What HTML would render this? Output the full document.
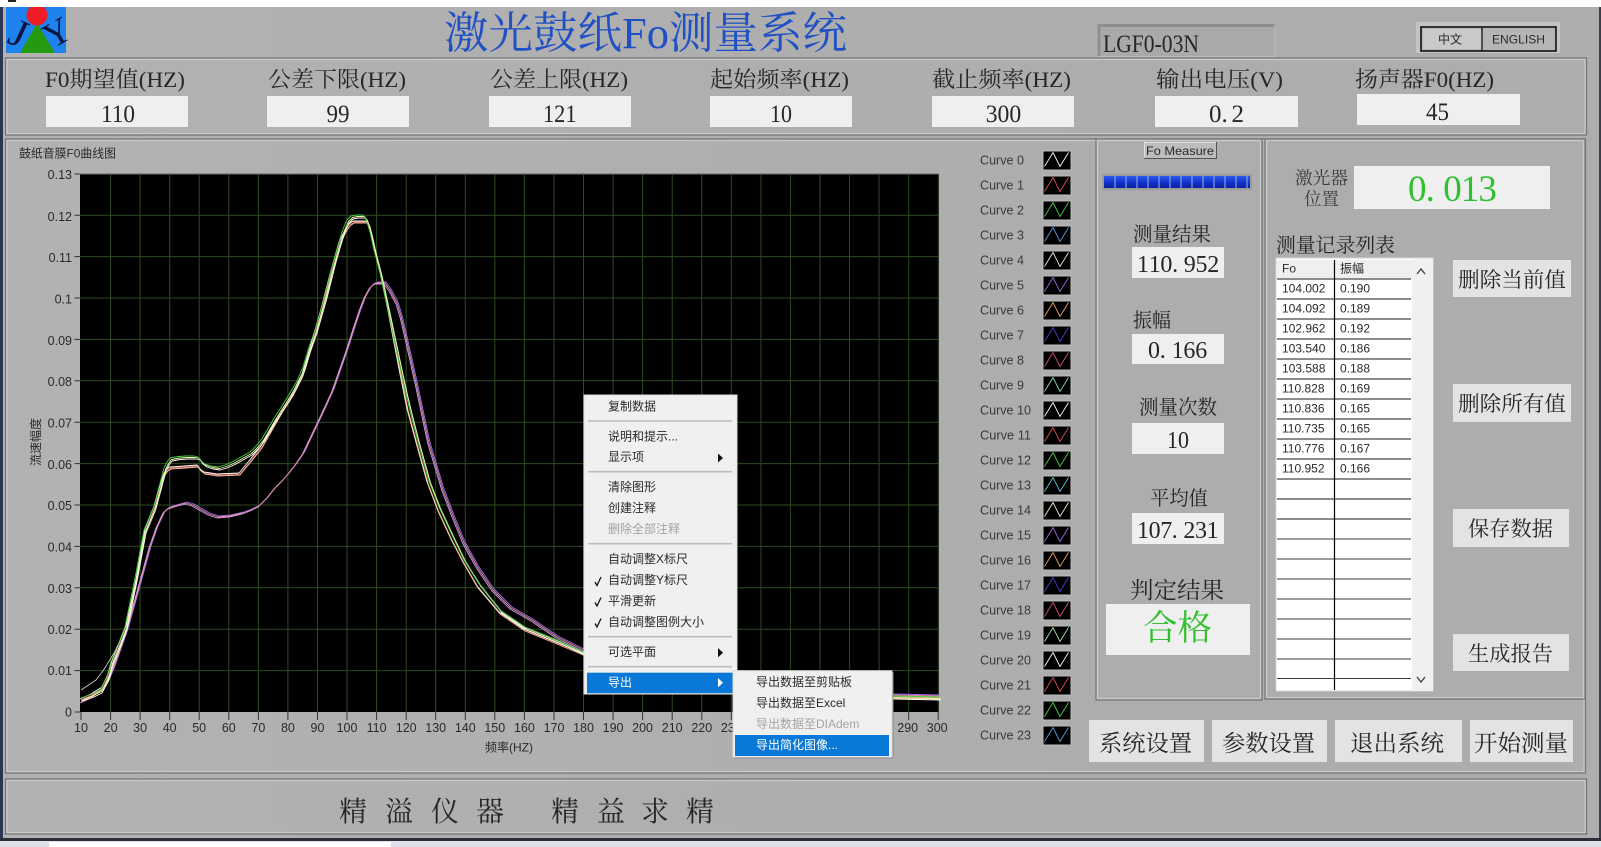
<!DOCTYPE html>
<html lang="zh-CN">
<head>
<meta charset="utf-8">
<title>激光鼓纸Fo测量系统</title>
<style>
html,body{margin:0;padding:0;width:1601px;height:847px;overflow:hidden;background:#adadad}
svg{display:block;position:absolute;left:0;top:0}
.s{font-family:"Liberation Serif","Noto Serif CJK SC",serif;fill:#262626}
.u{font-family:"Liberation Sans","Noto Sans CJK SC",sans-serif;fill:#2a2a2a;font-size:12px}
.l{font-size:22px}
.n{font-size:25px}
.b{font-size:21px}
.t{font-size:12.5px}
.c{font-size:12.5px;fill:#3a3a3a}
.p1{fill:none;stroke:#747474;stroke-width:1.2}
.p2{fill:none;stroke:#cbcbcb;stroke-width:1.2}
.v{fill:#efefef}
.k{fill:#e3e3e3}
</style>
</head>
<body>
<svg width="1601" height="847" viewBox="0 0 1601 847" xmlns="http://www.w3.org/2000/svg">
<defs>
<linearGradient id="bg" gradientUnits="userSpaceOnUse" x1="0" y1="0" x2="1100" y2="0"><stop offset="0" stop-color="#b2b2b2"/><stop offset="1" stop-color="#adadad"/></linearGradient>
<linearGradient id="bar" x1="0" y1="0" x2="0" y2="1"><stop offset="0" stop-color="#2c58ee"/><stop offset=".6" stop-color="#1030c8"/><stop offset="1" stop-color="#0a1f9c"/></linearGradient>
<polyline id="A" fill="none" points="81,698 92,694 100,690 107,677 111,662 118,645 125,627 136,573 144,530 153.600,507 159,487 164,468 167,462 170,458 178,456.500 186,456 194,456 198,457 201,461 205,464 211,466 218,467 225,465 232,462 241,457 250,452 257,445 262.500,438 273,420 287,398 297,381 303,367 308,350 315,330 325,295 333,263 338,245 343,229 347,220 351,216 356,215 363,215 366,219 370,232 374,250 380,273 388,310 400,367 405,390 411,415 418,442 428.500,480 439,507 452,535 464,560 478.500,583 500,610 525,627 557,640 583,652 640,672 733,688 892,696 939,697"/>
<polyline id="C" fill="none" points="81,700 92,695 103,688 109,675 113,662 127,627 137,580 146,530 155,507 160,490 165,474 168,470 171,468 186,467 198,466 201,470 205,473 218,475 240,474 250,462 262,447 270,433 282,412 293,395 303,375 312,345 322,310 331,275 340,243 346,231 350,225 354,222 367,222 370,226 375,248 381,273 389,312 400,370 408,410 418,447 428,483 439,512 452,540 464,563 478,587 500,613 525,630 557,643 583,654 640,673 733,689 892,697 939,698"/>
<polyline id="B" fill="none" points="81,702 92,697 103.500,688 109,679 114,667 120,650 127,630 139,587 150,547 157,527 164,512 169,508 175,506 186,503 193,505 200,509 209,514 218,517 230,516 243,513 251,510 259,506 267,498 275,488 282,481 289,473 296,464 303.500,453 313,433 323,412 333,390 340,370 347,350 354,328 360,310 365,297 370,288 374,284 377,283 385,283 390,290 397,303 401,316 405,333 411,360 417,387 428.600,442 443,490 453,516 464,543 478,568 493,590 511,608 532,620 557,637 583,650 640,671 733,687 892,695 939,696"/>
<path id="zz" d="M1044.500 167L1053 153L1060 167L1068.500 153" fill="none"/>
</defs>

<!-- page chrome -->
<rect width="1601" height="847" fill="url(#bg)"/>

<!-- logo -->
<rect x="6" y="7" width="60" height="46" fill="#1e82ef"/>
<polygon points="37,23 20,53 55,53" fill="#259a10"/>
<circle cx="37" cy="15" r="10.500" fill="#ee1c25"/>
<text class="s" font-size="40" style="fill:#0c1440" transform="translate(6,42) rotate(25)">J</text>
<text class="s" font-size="36" style="fill:#0c1440" transform="translate(51.700,49.500) rotate(-30)">Y</text>

<rect width="1601" height="7" fill="#fff"/>
<rect x="8" y="0" width="8" height="2" fill="#222"/>
<rect x="0" y="7" width="3" height="834" fill="#2a3654"/>
<rect x="1599" y="7" width="2" height="834" fill="#3a3f4c"/>
<rect x="0" y="838" width="1601" height="3" fill="#2b2f3a"/>
<rect x="0" y="841" width="1601" height="6" fill="#dfdfe9"/>
<rect x="49" y="842" width="342" height="5" fill="#fff"/>

<!-- title -->
<text class="s" x="444" y="48" font-size="44" textLength="403" lengthAdjust="spacingAndGlyphs" style="fill:#1f50c4">激光鼓纸Fo测量系统</text>

<!-- model box -->
<rect x="1098" y="24" width="177" height="33" fill="#a9a9a9"/>
<path d="M1099 56V25.500H1275" fill="none" stroke="#8e8e8e" stroke-width="3"/>
<path d="M1098 56.500H1275V25" fill="none" stroke="#bdbdbd" stroke-width="1"/>
<text class="s n" x="1103" y="52" textLength="96" lengthAdjust="spacingAndGlyphs">LGF0-03N</text>

<!-- language -->
<rect x="1416" y="22" width="144" height="31" fill="#c4c4c4"/>
<rect x="1421" y="27" width="135" height="24" fill="#b5b5b5" stroke="#111" stroke-width="1.600"/>
<rect x="1423" y="29" width="58" height="20" fill="#c9c9c9"/>
<path d="M1482 27V51" stroke="#222" stroke-width="1.400"/>
<text class="u" x="1438" y="43.500" font-size="12">中文</text>
<text class="u" x="1492" y="43.500" textLength="53" lengthAdjust="spacingAndGlyphs">ENGLISH</text>

<!-- parameter panel -->
<rect x="5.500" y="58" width="1581" height="77" class="p1"/>
<rect x="7" y="59.500" width="1578" height="74" class="p2"/>
<text class="s l" x="45" y="87" textLength="140" lengthAdjust="spacingAndGlyphs">F0期望值(HZ)</text>
<text class="s l" x="268" y="87" textLength="138" lengthAdjust="spacingAndGlyphs">公差下限(HZ)</text>
<text class="s l" x="490" y="87" textLength="138" lengthAdjust="spacingAndGlyphs">公差上限(HZ)</text>
<text class="s l" x="710" y="87" textLength="139" lengthAdjust="spacingAndGlyphs">起始频率(HZ)</text>
<text class="s l" x="932" y="87" textLength="139" lengthAdjust="spacingAndGlyphs">截止频率(HZ)</text>
<text class="s l" x="1156" y="87" textLength="127" lengthAdjust="spacingAndGlyphs">输出电压(V)</text>
<text class="s l" x="1355" y="87" textLength="139" lengthAdjust="spacingAndGlyphs">扬声器F0(HZ)</text>
<rect x="46" y="96" width="142" height="31" class="v"/>
<rect x="267" y="96" width="142" height="31" class="v"/>
<rect x="489" y="96" width="142" height="31" class="v"/>
<rect x="710" y="96" width="142" height="31" class="v"/>
<rect x="932" y="96" width="142" height="31" class="v"/>
<rect x="1155" y="96" width="143" height="31" class="v"/>
<rect x="1357" y="94" width="163" height="31" class="v"/>
<text class="s n" x="101" y="122" textLength="34" lengthAdjust="spacingAndGlyphs">110</text>
<text class="s n" x="326.500" y="122" textLength="23" lengthAdjust="spacingAndGlyphs">99</text>
<text class="s n" x="543" y="122" textLength="33.500" lengthAdjust="spacingAndGlyphs">121</text>
<text class="s n" x="770" y="122" textLength="22" lengthAdjust="spacingAndGlyphs">10</text>
<text class="s n" x="985.700" y="122" textLength="35.500" lengthAdjust="spacingAndGlyphs">300</text>
<text class="s n" x="1209 1221.500 1231.500" y="122">0.2</text>
<text class="s n" x="1426" y="120" textLength="23" lengthAdjust="spacingAndGlyphs">45</text>

<!-- main panels -->
<rect x="5.500" y="139" width="1580" height="634" class="p1"/>
<rect x="7" y="140.500" width="1577" height="631" class="p2"/>
<rect x="1096" y="139" width="166" height="561" class="p1"/>
<rect x="1097.500" y="140.500" width="163" height="558" class="p2"/>
<rect x="1265" y="139" width="320" height="560" class="p1"/>
<rect x="1266.500" y="140.500" width="317" height="557" class="p2"/>

<!-- bottom panel -->
<rect x="5.500" y="779" width="1581" height="55" class="p1"/>
<rect x="7" y="780.500" width="1578" height="52" class="p2"/>
<g font-size="28">
<text class="s" x="339" y="821">精</text><text class="s" x="385" y="821">溢</text><text class="s" x="431" y="821">仪</text><text class="s" x="476" y="821">器</text>
<text class="s" x="551" y="821">精</text><text class="s" x="597" y="821">益</text><text class="s" x="641" y="821">求</text><text class="s" x="686" y="821">精</text>
</g>

<!-- graph -->
<text class="u" x="19" y="157.500" textLength="97" lengthAdjust="spacingAndGlyphs">鼓纸音膜F0曲线图</text>
<rect x="80" y="174" width="859" height="538" fill="#000"/>
<path d="M80 174H939" stroke="#6a6a6a" stroke-width="1"/>
<path stroke="#2e4a22" stroke-width="1" fill="none" d="M110.600 174V712M140.100 174V712M169.700 174V712M199.200 174V712M228.800 174V712M258.400 174V712M287.900 174V712M317.500 174V712M347 174V712M376.600 174V712M406.200 174V712M435.700 174V712M465.300 174V712M494.800 174V712M524.400 174V712M554 174V712M583.500 174V712M613.100 174V712M642.600 174V712M672.200 174V712M701.800 174V712M731.300 174V712M760.900 174V712M790.400 174V712M820 174V712M849.600 174V712M879.100 174V712M908.700 174V712M938.200 174V712M80 670.600H939M80 629.200H939M80 587.800H939M80 546.400H939M80 505H939M80 463.600H939M80 422.200H939M80 380.800H939M80 339.400H939M80 298H939M80 256.600H939M80 215.200H939"/>
<path stroke="#333" stroke-width="1" fill="none" d="M81 712V720M110.600 712V720M140.100 712V720M169.700 712V720M199.200 712V720M228.800 712V720M258.400 712V720M287.900 712V720M317.500 712V720M347 712V720M376.600 712V720M406.200 712V720M435.700 712V720M465.300 712V720M494.800 712V720M524.400 712V720M554 712V720M583.500 712V720M613.100 712V720M642.600 712V720M672.200 712V720M701.800 712V720M731.300 712V720M760.900 712V720M790.400 712V720M820 712V720M849.600 712V720M879.100 712V720M908.700 712V720M938.200 712V720M74.500 712H80M74.500 670.600H80M74.500 629.200H80M74.500 587.800H80M74.500 546.400H80M74.500 505H80M74.500 463.600H80M74.500 422.200H80M74.500 380.800H80M74.500 339.400H80M74.500 298H80M74.500 256.600H80M74.500 215.200H80M74.500 174H80"/>
<g text-anchor="end">
<text class="u t" x="72" y="716.500">0</text><text class="u t" x="72" y="675">0.01</text><text class="u t" x="72" y="634">0.02</text><text class="u t" x="72" y="593">0.03</text><text class="u t" x="72" y="551.500">0.04</text><text class="u t" x="72" y="510">0.05</text><text class="u t" x="72" y="469">0.06</text><text class="u t" x="72" y="427.500">0.07</text><text class="u t" x="72" y="386">0.08</text><text class="u t" x="72" y="345">0.09</text><text class="u t" x="72" y="303.500">0.1</text><text class="u t" x="72" y="262">0.11</text><text class="u t" x="72" y="221">0.12</text><text class="u t" x="72" y="179">0.13</text>
</g>
<g text-anchor="middle">
<text class="u t" x="81" y="732">10</text><text class="u t" x="110.600" y="732">20</text><text class="u t" x="140.100" y="732">30</text><text class="u t" x="169.700" y="732">40</text><text class="u t" x="199.200" y="732">50</text><text class="u t" x="228.800" y="732">60</text><text class="u t" x="258.400" y="732">70</text><text class="u t" x="287.900" y="732">80</text><text class="u t" x="317.500" y="732">90</text><text class="u t" x="347" y="732">100</text><text class="u t" x="376.600" y="732">110</text><text class="u t" x="406.200" y="732">120</text><text class="u t" x="435.700" y="732">130</text><text class="u t" x="465.300" y="732">140</text><text class="u t" x="494.800" y="732">150</text><text class="u t" x="524.400" y="732">160</text><text class="u t" x="554" y="732">170</text><text class="u t" x="583.500" y="732">180</text><text class="u t" x="613.100" y="732">190</text><text class="u t" x="642.600" y="732">200</text><text class="u t" x="672.200" y="732">210</text><text class="u t" x="701.800" y="732">220</text><text class="u t" x="731.300" y="732">230</text><text class="u t" x="907.700" y="732">290</text><text class="u t" x="937.200" y="732">300</text>
</g>
<text class="u" x="485" y="751.500" textLength="48" lengthAdjust="spacingAndGlyphs">频率(HZ)</text>
<text class="u" transform="translate(40,466) rotate(-90)" textLength="48" lengthAdjust="spacingAndGlyphs">流速幅度</text>

<!-- curves -->
<g stroke-linejoin="round" stroke-width="0.900">
<use href="#B" stroke="#9a6ae8" transform="translate(1,-1)"/>
<use href="#B" stroke="#c9a0e8" transform="translate(-1,1)"/>
<use href="#B" stroke="#e88fa8"/>
<use href="#C" stroke="#e06060"/>
<use href="#C" stroke="#ffffff" transform="translate(-1,-1)"/>
<use href="#C" stroke="#f0c0a0" transform="translate(0,1)"/>
<use href="#A" stroke="#ffffff" transform="translate(2,3)"/>
<use href="#A" stroke="#ecf79a" transform="translate(1.500,1.500)"/>
<use href="#A" stroke="#44d044"/>
<polyline points="81,690 96,680 103.600,670 114,653 118,645" fill="none" stroke="#d8d8c8" stroke-width="0.800"/>
</g>

<!-- legend -->
<g transform="translate(0,-0.500)">
<text class="u c" x="980" y="165" textLength="44" lengthAdjust="spacingAndGlyphs">Curve 0</text>
<text class="u c" x="980" y="190" textLength="44" lengthAdjust="spacingAndGlyphs">Curve 1</text>
<text class="u c" x="980" y="215" textLength="44" lengthAdjust="spacingAndGlyphs">Curve 2</text>
<text class="u c" x="980" y="240" textLength="44" lengthAdjust="spacingAndGlyphs">Curve 3</text>
<text class="u c" x="980" y="265" textLength="44" lengthAdjust="spacingAndGlyphs">Curve 4</text>
<text class="u c" x="980" y="290" textLength="44" lengthAdjust="spacingAndGlyphs">Curve 5</text>
<text class="u c" x="980" y="315" textLength="44" lengthAdjust="spacingAndGlyphs">Curve 6</text>
<text class="u c" x="980" y="340" textLength="44" lengthAdjust="spacingAndGlyphs">Curve 7</text>
<text class="u c" x="980" y="365" textLength="44" lengthAdjust="spacingAndGlyphs">Curve 8</text>
<text class="u c" x="980" y="390" textLength="44" lengthAdjust="spacingAndGlyphs">Curve 9</text>
<text class="u c" x="980" y="415" textLength="51" lengthAdjust="spacingAndGlyphs">Curve 10</text>
<text class="u c" x="980" y="440" textLength="51" lengthAdjust="spacingAndGlyphs">Curve 11</text>
<text class="u c" x="980" y="465" textLength="51" lengthAdjust="spacingAndGlyphs">Curve 12</text>
<text class="u c" x="980" y="490" textLength="51" lengthAdjust="spacingAndGlyphs">Curve 13</text>
<text class="u c" x="980" y="515" textLength="51" lengthAdjust="spacingAndGlyphs">Curve 14</text>
<text class="u c" x="980" y="540" textLength="51" lengthAdjust="spacingAndGlyphs">Curve 15</text>
<text class="u c" x="980" y="565" textLength="51" lengthAdjust="spacingAndGlyphs">Curve 16</text>
<text class="u c" x="980" y="590" textLength="51" lengthAdjust="spacingAndGlyphs">Curve 17</text>
<text class="u c" x="980" y="615" textLength="51" lengthAdjust="spacingAndGlyphs">Curve 18</text>
<text class="u c" x="980" y="640" textLength="51" lengthAdjust="spacingAndGlyphs">Curve 19</text>
<text class="u c" x="980" y="665" textLength="51" lengthAdjust="spacingAndGlyphs">Curve 20</text>
<text class="u c" x="980" y="690" textLength="51" lengthAdjust="spacingAndGlyphs">Curve 21</text>
<text class="u c" x="980" y="715" textLength="51" lengthAdjust="spacingAndGlyphs">Curve 22</text>
<text class="u c" x="980" y="740" textLength="51" lengthAdjust="spacingAndGlyphs">Curve 23</text>
<g fill="#000" stroke="#bcbcbc" stroke-width="1">
<rect x="1043" y="151.500" width="28" height="19"/><rect x="1043" y="176.500" width="28" height="19"/><rect x="1043" y="201.500" width="28" height="19"/><rect x="1043" y="226.500" width="28" height="19"/><rect x="1043" y="251.500" width="28" height="19"/><rect x="1043" y="276.500" width="28" height="19"/><rect x="1043" y="301.500" width="28" height="19"/><rect x="1043" y="326.500" width="28" height="19"/><rect x="1043" y="351.500" width="28" height="19"/><rect x="1043" y="376.500" width="28" height="19"/><rect x="1043" y="401.500" width="28" height="19"/><rect x="1043" y="426.500" width="28" height="19"/><rect x="1043" y="451.500" width="28" height="19"/><rect x="1043" y="476.500" width="28" height="19"/><rect x="1043" y="501.500" width="28" height="19"/><rect x="1043" y="526.500" width="28" height="19"/><rect x="1043" y="551.500" width="28" height="19"/><rect x="1043" y="576.500" width="28" height="19"/><rect x="1043" y="601.500" width="28" height="19"/><rect x="1043" y="626.500" width="28" height="19"/><rect x="1043" y="651.500" width="28" height="19"/><rect x="1043" y="676.500" width="28" height="19"/><rect x="1043" y="701.500" width="28" height="19"/><rect x="1043" y="726.500" width="28" height="19"/>
</g>
<g stroke-width="0.900">
<use href="#zz" stroke="#ffffff"/>
<use href="#zz" y="25" stroke="#e05050"/>
<use href="#zz" y="50" stroke="#45d045"/>
<use href="#zz" y="75" stroke="#5a9ce0"/>
<use href="#zz" y="100" stroke="#f0f0d8"/>
<use href="#zz" y="125" stroke="#9a6ae0"/>
<use href="#zz" y="150" stroke="#e8a860"/>
<use href="#zz" y="175" stroke="#4a40d0"/>
<use href="#zz" y="200" stroke="#d05080"/>
<use href="#zz" y="225" stroke="#80e0b0"/>
<use href="#zz" y="250" stroke="#ffffff"/>
<use href="#zz" y="275" stroke="#e05050"/>
<use href="#zz" y="300" stroke="#45d045"/>
<use href="#zz" y="325" stroke="#60c8d8"/>
<use href="#zz" y="350" stroke="#f0f0d8"/>
<use href="#zz" y="375" stroke="#9a6ae0"/>
<use href="#zz" y="400" stroke="#e8a860"/>
<use href="#zz" y="425" stroke="#4a40d0"/>
<use href="#zz" y="450" stroke="#d05080"/>
<use href="#zz" y="475" stroke="#a0e8b0"/>
<use href="#zz" y="500" stroke="#ffffff"/>
<use href="#zz" y="525" stroke="#e05050"/>
<use href="#zz" y="550" stroke="#45d045"/>
<use href="#zz" y="575" stroke="#5a9ce0"/>
</g>
</g>

<!-- Fo panel -->
<rect x="1144" y="142" width="73" height="17" fill="#bcbcbc"/>
<path d="M1144.500 159V142.500H1217" fill="none" stroke="#e0e0e0"/>
<path d="M1144 158.500H1216.500V142" fill="none" stroke="#555"/>
<text class="u" x="1146" y="155" textLength="68" lengthAdjust="spacingAndGlyphs">Fo Measure</text>
<rect x="1102" y="174" width="150" height="16" fill="#9b9b9b"/>
<rect x="1104" y="176" width="146" height="12" fill="url(#bar)"/>
<path stroke="#9fb0e0" stroke-width="1" d="M1115 176v12M1126 176v12M1137 176v12M1148 176v12M1159 176v12M1170 176v12M1181 176v12M1192 176v12M1203 176v12M1214 176v12M1225 176v12M1236 176v12M1247 176v12"/>

<text class="s" x="1133" y="241" font-size="20" textLength="78" lengthAdjust="spacingAndGlyphs">测量结果</text>
<rect x="1132" y="247" width="92" height="31" class="v"/>
<text class="s" x="1137 1148.700 1160.400 1172.100 1183.800 1195.500 1207.200" y="272" font-size="24">110.952</text>
<text class="s" x="1133" y="327" font-size="20" textLength="38" lengthAdjust="spacingAndGlyphs">振幅</text>
<rect x="1132" y="334" width="92" height="30" class="v"/>
<text class="s" x="1148 1159.800 1171.600 1183.400 1195.200" y="358" font-size="24">0.166</text>
<text class="s" x="1139" y="414" font-size="20" textLength="78" lengthAdjust="spacingAndGlyphs">测量次数</text>
<rect x="1132" y="423" width="92" height="31" class="v"/>
<text class="s" x="1167" y="448" font-size="24" textLength="22" lengthAdjust="spacingAndGlyphs">10</text>
<text class="s" x="1150" y="505" font-size="20" textLength="58" lengthAdjust="spacingAndGlyphs">平均值</text>
<rect x="1132" y="513" width="92" height="31" class="v"/>
<text class="s" x="1137 1148.600 1160.200 1171.800 1183.400 1195 1206.600" y="538" font-size="24">107.231</text>
<text class="s" x="1130" y="598" font-size="23" textLength="94" lengthAdjust="spacingAndGlyphs">判定结果</text>
<rect x="1106" y="604" width="144" height="51" class="v"/>
<text class="s" x="1143" y="640" font-size="35" textLength="69" lengthAdjust="spacingAndGlyphs" style="fill:#2fc02f">合格</text>

<!-- laser -->
<text class="s" x="1295" y="184" font-size="17.500" textLength="53" lengthAdjust="spacingAndGlyphs" style="fill:#3c3c3c">激光器</text>
<text class="s" x="1304" y="205" font-size="17.500" textLength="35" lengthAdjust="spacingAndGlyphs" style="fill:#3c3c3c">位置</text>
<rect x="1354" y="166" width="196" height="43" class="v"/>
<text class="s" x="1408 1425.600 1443.200 1460.800 1478.400" y="201" font-size="37" style="fill:#2fc02f">0.013</text>

<!-- table -->
<text class="s" x="1276" y="252" font-size="20" textLength="119" lengthAdjust="spacingAndGlyphs">测量记录列表</text>
<rect x="1276" y="258" width="157" height="433" fill="#fff" stroke="#d5d5d5" stroke-width="1"/>
<rect x="1412" y="259" width="21" height="432" fill="#f0f0f0"/>
<rect x="1277" y="260" width="135" height="18" fill="#efefef"/>
<path stroke="#666" stroke-width="1.500" d="M1277 279H1411M1277 299H1411M1277 319H1411M1277 339H1411M1277 359H1411M1277 379H1411M1277 399H1411M1277 419H1411M1277 439H1411M1277 459H1411M1277 479H1411M1277 499H1411M1277 519H1411"/>
<path stroke="#3a3a3a" stroke-width="1" d="M1277 539H1411M1277 559H1411M1277 579H1411M1277 599H1411M1277 619H1411M1277 639H1411M1277 659H1411M1277 678.500H1411"/>
<path stroke="#000" stroke-width="1.200" d="M1334.500 260V690"/>
<path d="M1417 274L1421 269L1425 274" fill="none" stroke="#444" stroke-width="1.400"/>
<path d="M1417 677L1421 682L1425 677" fill="none" stroke="#444" stroke-width="1.400"/>
<text class="u" x="1282" y="272.500">Fo</text><text class="u" x="1340" y="272.500">振幅</text>
<text class="u" x="1282" y="292.500">104.002</text><text class="u" x="1340" y="292.500">0.190</text>
<text class="u" x="1282" y="312.500">104.092</text><text class="u" x="1340" y="312.500">0.189</text>
<text class="u" x="1282" y="332.500">102.962</text><text class="u" x="1340" y="332.500">0.192</text>
<text class="u" x="1282" y="352.500">103.540</text><text class="u" x="1340" y="352.500">0.186</text>
<text class="u" x="1282" y="372.500">103.588</text><text class="u" x="1340" y="372.500">0.188</text>
<text class="u" x="1282" y="392.500">110.828</text><text class="u" x="1340" y="392.500">0.169</text>
<text class="u" x="1282" y="412.500">110.836</text><text class="u" x="1340" y="412.500">0.165</text>
<text class="u" x="1282" y="432.500">110.735</text><text class="u" x="1340" y="432.500">0.165</text>
<text class="u" x="1282" y="452.500">110.776</text><text class="u" x="1340" y="452.500">0.167</text>
<text class="u" x="1282" y="472.500">110.952</text><text class="u" x="1340" y="472.500">0.166</text>

<!-- side buttons -->
<rect x="1453" y="260" width="118" height="37" class="k"/>
<text class="s b" x="1458" y="287" textLength="108" lengthAdjust="spacingAndGlyphs">删除当前值</text>
<rect x="1453" y="384" width="118" height="38" class="k"/>
<text class="s b" x="1458" y="411" textLength="108" lengthAdjust="spacingAndGlyphs">删除所有值</text>
<rect x="1453" y="509" width="116" height="38" class="k"/>
<text class="s b" x="1468" y="536" textLength="85" lengthAdjust="spacingAndGlyphs">保存数据</text>
<rect x="1453" y="634" width="116" height="37" class="k"/>
<text class="s b" x="1468" y="661" textLength="85" lengthAdjust="spacingAndGlyphs">生成报告</text>

<!-- bottom buttons -->
<rect x="1089" y="720" width="115" height="42" class="k"/>
<text class="s" x="1099" y="751" font-size="23" textLength="93" lengthAdjust="spacingAndGlyphs">系统设置</text>
<rect x="1212" y="720" width="115" height="42" class="k"/>
<text class="s" x="1222" y="751" font-size="23" textLength="93" lengthAdjust="spacingAndGlyphs">参数设置</text>
<rect x="1335" y="720" width="127" height="42" class="k"/>
<text class="s" x="1350" y="751" font-size="23" textLength="94" lengthAdjust="spacingAndGlyphs">退出系统</text>
<rect x="1470" y="720" width="103" height="42" class="k"/>
<text class="s" x="1474" y="751" font-size="23" textLength="94" lengthAdjust="spacingAndGlyphs">开始测量</text>

<!-- context menu -->
<rect x="584" y="395" width="153" height="299" fill="#f0f0f0" stroke="#dcdcdc" stroke-width="1"/>
<path stroke="#bcbcbc" stroke-width="1.600" d="M588 421H732M588 471.700H732M588 543.700H732M588 636.700H732M588 666.700H732"/>
<rect x="587" y="672.700" width="146" height="20.500" fill="#0a78d7"/>
<text class="u" x="608" y="410.500">复制数据</text>
<text class="u" x="608" y="440.500">说明和提示...</text>
<text class="u" x="608" y="461">显示项</text>
<text class="u" x="608" y="491">清除图形</text>
<text class="u" x="608" y="512">创建注释</text>
<text class="u" x="608" y="533" style="fill:#a4a4a4">删除全部注释</text>
<text class="u" x="608" y="563">自动调整X标尺</text>
<text class="u" x="608" y="584">自动调整Y标尺</text>
<text class="u" x="608" y="605">平滑更新</text>
<text class="u" x="608" y="626">自动调整图例大小</text>
<text class="u" x="608" y="656">可选平面</text>
<text class="u" x="608" y="686.500" style="fill:#fff">导出</text>
<path d="M718 453.500L723 458L718 462.500Z" fill="#111"/>
<path d="M718 648L723 652.700L718 657.400Z" fill="#111"/>
<path d="M718 678L723 682.700L718 687.400Z" fill="#fff"/>
<path d="M595 582L597 585.500L601 577" fill="none" stroke="#111" stroke-width="1.300"/>
<path d="M595 602.500L597 606L601 597.500" fill="none" stroke="#111" stroke-width="1.300"/>
<path d="M595 623.500L597 627L601 618.500" fill="none" stroke="#111" stroke-width="1.300"/>

<!-- submenu -->
<rect x="733" y="670.700" width="159" height="86.300" fill="#f0f0f0" stroke="#dcdcdc" stroke-width="1"/>
<path d="M734 758H893V672" fill="none" stroke="#8a8a8a" stroke-width="1"/>
<rect x="735" y="735" width="154" height="21" fill="#0a78d7"/>
<text class="u" x="756" y="686">导出数据至剪贴板</text>
<text class="u" x="756" y="707">导出数据至Excel</text>
<text class="u" x="756" y="728" style="fill:#a4a4a4">导出数据至DIAdem</text>
<text class="u" x="756" y="749" style="fill:#fff">导出简化图像...</text>
</svg>
</body>
</html>
